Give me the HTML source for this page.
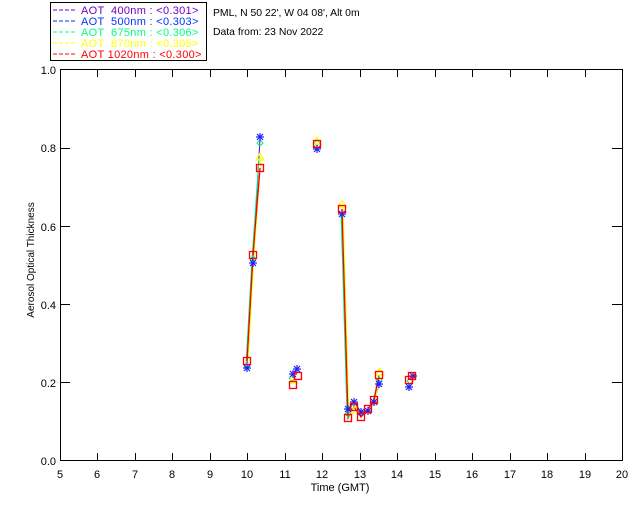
<!DOCTYPE html>
<html><head><meta charset="utf-8"><style>
html,body{margin:0;padding:0;background:#fff;width:640px;height:512px;overflow:hidden}
svg{display:block}
text{font-family:"Liberation Sans",sans-serif;font-size:11px}
</style></head><body>
<svg width="640" height="512" viewBox="0 0 640 512" xmlns="http://www.w3.org/2000/svg">
<defs>
<g id="ast" stroke="#2020ff" stroke-width="1.2"><line x1="-4" y1="0" x2="4" y2="0"/><line x1="0" y1="-4" x2="0" y2="4"/><line x1="-3" y1="-3" x2="3" y2="3"/><line x1="-3" y1="3" x2="3" y2="-3"/></g>
<rect id="sq" x="-3.5" y="-3.5" width="7" height="7" fill="none" stroke="#ff0000" stroke-width="1.3"/>
<g id="tri" fill="none" stroke="#ffff00" stroke-width="1.2"><polygon points="0,-4 4,3 -4,3"/></g>
<g id="dm" fill="none" stroke="#00ee88" stroke-width="1"><polygon points="0,-3 3,0 0,3 -3,0"/></g>
</defs>
<rect x="50.5" y="2.5" width="156" height="58" fill="none" stroke="#000" stroke-width="1"/>
<g stroke-width="1" stroke-dasharray="4,2">
<line x1="53" y1="10" x2="75" y2="10" stroke="#7000c0"/>
<line x1="53" y1="21" x2="75" y2="21" stroke="#0033ff"/>
<line x1="53" y1="32" x2="75" y2="32" stroke="#00ff80"/>
<line x1="53" y1="43" x2="75" y2="43" stroke="#ffff00"/>
<line x1="53" y1="54" x2="75" y2="54" stroke="#ff0000"/>
</g>
<g style="letter-spacing:0.3px">
<text x="81" y="14" fill="#7000c0" xml:space="preserve">AOT  400nm : &lt;0.301&gt;</text>
<text x="81" y="25" fill="#0033ff" xml:space="preserve">AOT  500nm : &lt;0.303&gt;</text>
<text x="81" y="36" fill="#00ff80" xml:space="preserve">AOT  675nm : &lt;0.306&gt;</text>
<text x="81" y="47" fill="#ffff00" xml:space="preserve">AOT  870nm : &lt;0.305&gt;</text>
<text x="81" y="58" fill="#ff0000" xml:space="preserve">AOT 1020nm : &lt;0.300&gt;</text>
</g>
<text x="213" y="16" fill="#000" style="font-size:10.4px">PML, N 50 22', W 04 08', Alt 0m</text>
<text x="213" y="35" fill="#000" style="font-size:10.4px">Data from: 23 Nov 2022</text>
<rect x="60.5" y="69.5" width="562" height="391" fill="none" stroke="#000" stroke-width="1"/>
<g stroke="#000" stroke-width="1">
<line x1="97.5" y1="460" x2="97.5" y2="453"/><line x1="135.5" y1="460" x2="135.5" y2="453"/><line x1="172.5" y1="460" x2="172.5" y2="453"/><line x1="210.5" y1="460" x2="210.5" y2="453"/><line x1="247.5" y1="460" x2="247.5" y2="453"/><line x1="285.5" y1="460" x2="285.5" y2="453"/><line x1="322.5" y1="460" x2="322.5" y2="453"/><line x1="360.5" y1="460" x2="360.5" y2="453"/><line x1="397.5" y1="460" x2="397.5" y2="453"/><line x1="435.5" y1="460" x2="435.5" y2="453"/><line x1="472.5" y1="460" x2="472.5" y2="453"/><line x1="510.5" y1="460" x2="510.5" y2="453"/><line x1="547.5" y1="460" x2="547.5" y2="453"/><line x1="585.5" y1="460" x2="585.5" y2="453"/>
<line x1="97.5" y1="70" x2="97.5" y2="77"/><line x1="135.5" y1="70" x2="135.5" y2="77"/><line x1="172.5" y1="70" x2="172.5" y2="77"/><line x1="210.5" y1="70" x2="210.5" y2="77"/><line x1="247.5" y1="70" x2="247.5" y2="77"/><line x1="285.5" y1="70" x2="285.5" y2="77"/><line x1="322.5" y1="70" x2="322.5" y2="77"/><line x1="360.5" y1="70" x2="360.5" y2="77"/><line x1="397.5" y1="70" x2="397.5" y2="77"/><line x1="435.5" y1="70" x2="435.5" y2="77"/><line x1="472.5" y1="70" x2="472.5" y2="77"/><line x1="510.5" y1="70" x2="510.5" y2="77"/><line x1="547.5" y1="70" x2="547.5" y2="77"/><line x1="585.5" y1="70" x2="585.5" y2="77"/>
<line x1="60" y1="148.5" x2="70" y2="148.5"/><line x1="60" y1="226.5" x2="70" y2="226.5"/><line x1="60" y1="304.5" x2="70" y2="304.5"/><line x1="60" y1="382.5" x2="70" y2="382.5"/>
<line x1="622" y1="148.5" x2="612" y2="148.5"/><line x1="622" y1="226.5" x2="612" y2="226.5"/><line x1="622" y1="304.5" x2="612" y2="304.5"/><line x1="622" y1="382.5" x2="612" y2="382.5"/>
</g>
<g fill="#000" text-anchor="middle">
<text x="60" y="478">5</text><text x="97" y="478">6</text><text x="135" y="478">7</text><text x="172" y="478">8</text><text x="210" y="478">9</text><text x="247" y="478">10</text><text x="285" y="478">11</text><text x="322" y="478">12</text><text x="360" y="478">13</text><text x="397" y="478">14</text><text x="435" y="478">15</text><text x="472" y="478">16</text><text x="510" y="478">17</text><text x="547" y="478">18</text><text x="585" y="478">19</text><text x="622" y="478">20</text>
<text x="340" y="491">Time (GMT)</text>
</g>
<g fill="#000" text-anchor="end">
<text x="56" y="465">0.0</text><text x="56" y="387">0.2</text><text x="56" y="309">0.4</text><text x="56" y="231">0.6</text><text x="56" y="152">0.8</text><text x="56" y="74">1.0</text>
</g>
<text transform="translate(34,260) rotate(-90)" text-anchor="middle" fill="#000" style="font-size:10px">Aerosol Optical Thickness</text>
<g fill="none" stroke-width="1">
<polyline stroke="#7000c0" points="247,368 253,263 260,138"/>
<polyline stroke="#7000c0" points="342,218 348,409 354,402 361,412 368,411 374,402 379,384"/>
<polyline stroke="#00ee88" points="246,364 252,259 259,158"/>
<polyline stroke="#00ee88" points="341,212 347,414 353,404 360,414 367,410 373,402 378,380"/>
<polyline stroke="#ffff00" points="248,362 254,257 261,157"/>
<polyline stroke="#ffff00" points="343,205 349,416 355,406 362,416 369,409 375,400 380,376"/>
<polyline stroke="#ff0000" stroke-width="1.3" points="247,361 253,255 260,168"/>
<polyline stroke="#ff0000" stroke-width="1.3" points="342,209 348,418 354,407 361,417 368,409 374,400 379,375"/>
</g>
<g>
<use href="#dm" x="260" y="143"/><use href="#dm" x="253" y="259"/><use href="#dm" x="247" y="366"/><use href="#dm" x="292" y="378"/><use href="#dm" x="317" y="143"/><use href="#dm" x="348" y="414"/><use href="#dm" x="379" y="380"/><use href="#dm" x="410" y="381"/>
<use href="#tri" x="260" y="157"/><use href="#tri" x="317" y="141"/><use href="#tri" x="342" y="204"/><use href="#tri" x="293" y="380"/><use href="#tri" x="355" y="410"/><use href="#tri" x="380" y="372"/>
<use href="#ast" x="260" y="137"/><use href="#ast" x="253" y="263"/><use href="#ast" x="247" y="368"/><use href="#ast" x="293" y="374"/><use href="#ast" x="297" y="369"/><use href="#ast" x="317" y="149"/><use href="#ast" x="342" y="214"/><use href="#ast" x="348" y="409"/><use href="#ast" x="354" y="402"/><use href="#ast" x="361" y="412"/><use href="#ast" x="368" y="411"/><use href="#ast" x="374" y="402"/><use href="#ast" x="379" y="384"/><use href="#ast" x="409" y="387"/><use href="#ast" x="413" y="376"/>
<use href="#sq" x="260" y="168"/><use href="#sq" x="253" y="255"/><use href="#sq" x="247" y="361"/><use href="#sq" x="293" y="385"/><use href="#sq" x="298" y="376"/><use href="#sq" x="317" y="144"/><use href="#sq" x="342" y="209"/><use href="#sq" x="348" y="418"/><use href="#sq" x="354" y="407"/><use href="#sq" x="361" y="417"/><use href="#sq" x="368" y="409"/><use href="#sq" x="374" y="400"/><use href="#sq" x="379" y="375"/><use href="#sq" x="409" y="380"/><use href="#sq" x="412" y="376"/>
</g>
</svg>
</body></html>
